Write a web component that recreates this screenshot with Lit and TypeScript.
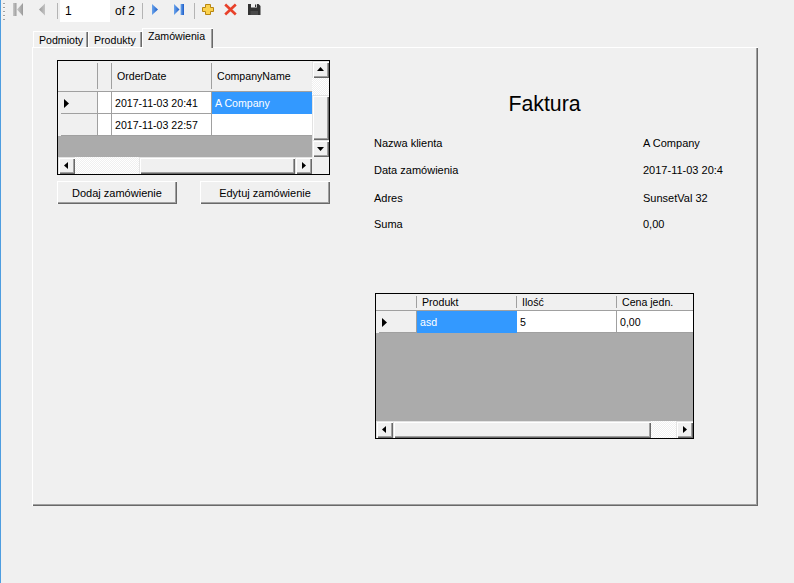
import { LitElement, html, css, svg } from 'lit';
import { customElement, property } from 'lit/decorators.js';

const arrow = (dir: 'up' | 'down' | 'left' | 'right') => {
  const points = {
    up: '1,6 4.5,2 8,6',
    down: '1,3 8,3 4.5,7',
    left: '6,1 6,8 2,4.5',
    right: '3,1 3,8 7,4.5',
  }[dir];
  return html`<svg width="9" height="9" viewBox="0 0 9 9"><polygon points=${points} fill="#000" /></svg>`;
};

@customElement('data-grid')
export class DataGrid extends LitElement {
  static styles = css`
    :host {
      display: block;
      box-sizing: border-box;
      border: 1px solid #000;
      font: 10.6px 'Liberation Sans', Arial, sans-serif;
      color: #000;
      background: #ababab;
    }
    .frame {
      display: flex;
    }
    .main {
      flex: 1;
      min-width: 0;
      display: flex;
      flex-direction: column;
    }
    .cells {
      display: grid;
    }
    .head {
      display: flex;
      align-items: center;
      padding-left: 5px;
      background:
        linear-gradient(#a0a0a0, #a0a0a0) right 2px / 1px calc(100% - 4px) no-repeat,
        #f0f0f0;
      border-bottom: 1px solid #a0a0a0;
      overflow: hidden;
      white-space: nowrap;
    }
    .head.last {
      background: #f0f0f0;
    }
    .rowhead {
      display: flex;
      align-items: center;
      padding-left: 5px;
      background:
        linear-gradient(#a0a0a0, #a0a0a0) 3px 100% / 100% 1px no-repeat,
        #f0f0f0;
      border-right: 1px solid #a0a0a0;
      box-sizing: border-box;
    }
    .cell {
      display: flex;
      align-items: center;
      padding-left: 3px;
      background: #fff;
      border-right: 1px solid #a0a0a0;
      border-bottom: 1px solid #a0a0a0;
      overflow: hidden;
      white-space: nowrap;
    }
    .cell.last {
      border-right: none;
    }
    .cell.selected {
      background: #3399ff;
      color: #fff;
      border-color: #3399ff;
    }
    .empty {
      background: #ababab;
    }
    .bar {
      display: flex;
      flex: none;
    }
    .bar.h {
      height: 17px;
    }
    .bar.v {
      width: 17px;
      flex-direction: column;
    }
    .btn,
    .thumb {
      background: #f0f0f0;
      box-shadow:
        inset 1px 1px 0 #e3e3e3,
        inset 2px 2px 0 #fff,
        inset -1px -1px 0 #696969,
        inset -2px -2px 0 #a0a0a0;
    }
    .btn {
      flex: none;
      width: 17px;
      height: 17px;
      display: flex;
      align-items: center;
      justify-content: center;
    }
    .track {
      background: repeating-conic-gradient(#f0f0f0 0 25%, #fff 0 50%) 0 0 / 2px 2px;
      flex: none;
    }
    .corner {
      width: 17px;
      height: 17px;
      background: #f0f0f0;
      flex: none;
    }
  `;

  @property({ type: Array }) columns: { title: string; width: number }[] = [];
  @property({ type: Array }) rows: { value: string; selected?: boolean }[][] = [];
  @property({ type: Number }) headWidth = 40;
  @property({ type: Number }) headHeight = 31;
  @property({ type: Number }) fill = 21;
  @property({ type: Array }) hbar: number[] = [];
  @property({ type: Array }) vbar: number[] | null = null;

  private _hTrack() {
    // before-thumb track, thumb, after-thumb track
    const [before, thumb, after] = this.hbar;
    return html`
      <div class="bar h">
        <div class="btn">${arrow('left')}</div>
        ${before ? html`<div class="track" style="width:${before}px"></div>` : ''}
        <div class="thumb" style="width:${thumb}px"></div>
        ${after ? html`<div class="track" style="width:${after}px"></div>` : ''}
        <div class="btn">${arrow('right')}</div>
      </div>
    `;
  }

  render() {
    const template = [this.headWidth, ...this.columns.map((c) => c.width)].map((w) => `${w}px`).join(' ');
    const lastCol = this.columns.length - 1;
    return html`
      <div class="frame">
        <div class="main">
          <div class="cells" style="grid-template-columns:${template};grid-auto-rows:22px;grid-template-rows:${this.headHeight}px">
            <div class="head"></div>
            ${this.columns.map((c, n) => html`<div class="head ${n === lastCol ? 'last' : ''}">${c.title}</div>`)}
            ${this.rows.map(
              (row, i) => html`
                <div class="rowhead">
                  ${i === 0
                    ? html`<svg width="8" height="11" viewBox="0 0 8 11"><polygon points="1,1 1,10 6,5.5" fill="#000" /></svg>`
                    : ''}
                </div>
                ${row.map(
                  (c, n) =>
                    html`<div class="cell ${c.selected ? 'selected' : ''} ${n === lastCol ? 'last' : ''}">${c.value}</div>`,
                )}
              `,
            )}
          </div>
          <div class="empty" style="height:${this.fill}px"></div>
          ${this._hTrack()}
        </div>
        ${this.vbar
          ? html`
              <div class="bar v">
                <div class="btn">${arrow('up')}</div>
                <div class="track" style="height:${this.vbar[0]}px"></div>
                <div class="thumb" style="height:${this.vbar[1]}px"></div>
                <div class="btn">${arrow('down')}</div>
                <div class="corner"></div>
              </div>
            `
          : ''}
      </div>
    `;
  }
}

const icons = {
  first: svg`<defs><linearGradient id="g1" x1="0" x2="1"><stop offset="0" stop-color="#c8c8c8"/><stop offset="1" stop-color="#9a9a9a"/></linearGradient></defs>
    <rect x="1" y="3" width="3.5" height="13" fill="url(#g1)"/><polygon points="11,3 11,16 5,9.5" fill="url(#g1)"/>`,
  prev: svg`<defs><linearGradient id="g2" x1="0" x2="1"><stop offset="0" stop-color="#9a9a9a"/><stop offset="1" stop-color="#c4c4c4"/></linearGradient></defs>
    <polygon points="10,3.5 10,15.5 4,9.5" fill="url(#g2)"/>`,
  next: svg`<defs><linearGradient id="g3" x1="0" x2="1"><stop offset="0" stop-color="#6ba5ec"/><stop offset="1" stop-color="#1c5cc8"/></linearGradient></defs>
    <polygon points="3,4 3,15 9,9.5" fill="url(#g3)"/>`,
  last: svg`<defs><linearGradient id="g4" x1="0" x2="1"><stop offset="0" stop-color="#6ba5ec"/><stop offset="1" stop-color="#1c5cc8"/></linearGradient></defs>
    <polygon points="2,4 2,15 7.5,9.5" fill="url(#g4)"/><rect x="8.6" y="4" width="3.4" height="11" fill="url(#g4)"/>`,
  add: svg`<polygon points="4.5,4.5 9.5,4.5 9.5,7.5 12.5,7.5 12.5,11.5 9.5,11.5 9.5,14.5 4.5,14.5 4.5,11.5 1.5,11.5 1.5,7.5 4.5,7.5" fill="#fbd24e" stroke="#b8860f" stroke-width="1"/>`,
  remove: svg`<path d="M1.2 4.5 L11.8 14.5 M11.8 4.5 L1.2 14.5" stroke="#e8412a" stroke-width="2.6" fill="none"/>`,
  save: svg`<path d="M1 4 H11.5 L13.5 6 V15 H1 Z" fill="#333"/><rect x="4" y="4" width="6" height="3.5" fill="#f0f0f0"/><rect x="8" y="4.5" width="1.2" height="2.5" fill="#333"/><rect x="3.5" y="11" width="7.5" height="4" fill="#4a4a4a"/>`,
};

@customElement('app-root')
export class AppRoot extends LitElement {
  static styles = css`
    :host {
      display: block;
      min-height: 583px;
      box-sizing: border-box;
      background: #f0f0f0;
      border-left: 1px solid #4d9de0;
      font: 11px 'Liberation Sans', Arial, sans-serif;
      color: #000;
    }
    .toolbar {
      display: flex;
      align-items: flex-start;
      height: 28px;
    }
    .grip {
      width: 2px;
      height: 17px;
      margin: 3px 3px 0 2px;
      background: repeating-linear-gradient(#a0a0a0 0 1px, #f8f8f8 1px 2px, #f0f0f0 2px 4px);
    }
    .tool {
      width: 23px;
      height: 22px;
      padding-left: 4px;
      box-sizing: border-box;
    }
    .tool svg {
      display: block;
    }
    .sep {
      width: 1px;
      height: 16px;
      margin: 3px 2px 0 3px;
      background: #b4b4b4;
    }
    .pos {
      width: 50px;
      height: 22px;
      box-sizing: border-box;
      padding: 4px 5px 0;
      background: #fff;
      font-size: 12px;
    }
    .count {
      width: 29px;
      box-sizing: border-box;
      padding: 4px 0 0 5px;
      font-size: 12px;
      white-space: nowrap;
    }
    .tabs {
      display: flex;
      align-items: flex-end;
      height: 20px;
      padding-left: 32px;
      position: relative;
      z-index: 1;
      margin-bottom: -1px;
      font-size: 10.6px;
    }
    .tab {
      height: 17px;
      line-height: 17px;
      box-sizing: border-box;
      padding: 1px 0 0 6px;
      background: #f0f0f0;
      box-shadow:
        inset 1px 1px 0 #fff,
        inset -1px 0 0 #696969,
        inset -2px 0 0 #a0a0a0;
      border-bottom: 1px solid #fff;
    }
    .tab.first {
      width: 55px;
    }
    .tab.second {
      width: 54px;
    }
    .tab.active {
      width: 71px;
      height: 20px;
      padding: 0 0 2px 6px;
      border-bottom: none;
      line-height: 17px;
    }
    .panel {
      width: 727px;
      height: 459px;
      margin-left: 30px;
      box-sizing: border-box;
      padding: 13px 0 0 26px;
      display: flex;
      gap: 44px;
      background: #f0f0f0;
      box-shadow:
        inset 1px 0 0 #f0f0f0,
        inset 2px 1px 0 #fff,
        inset -1px -1px 0 #696969,
        inset -2px -2px 0 #a0a0a0;
    }
    .left {
      width: 273px;
      flex: none;
    }
    .actions {
      display: flex;
      justify-content: space-between;
      margin-top: 6px;
    }
    .action {
      height: 23px;
      padding: 0;
      border: none;
      font: inherit;
      color: #000;
      background: #f0f0f0;
      box-shadow:
        inset 1px 1px 0 #fff,
        inset -1px -1px 0 #696969,
        inset -2px -2px 0 #a0a0a0;
    }
    .action.add {
      width: 120px;
    }
    .action.edit {
      width: 130px;
    }
    .right {
      width: 349px;
      flex: none;
    }
    .title {
      margin: 32px 8px 0 0;
      height: 24px;
      line-height: 24px;
      text-align: center;
      font-size: 21.3px;
      font-weight: normal;
    }
    .info {
      display: grid;
      grid-template-columns: 269px 80px;
      grid-template-rows: 27px 28px 28px 24px;
      align-items: center;
      margin-top: 13px;
    }
    .info div {
      white-space: nowrap;
    }
    .lines {
      margin: 57px 0 0 1px;
      width: 319px;
    }
  `;

  private orders = [
    [{ value: '' }, { value: '2017-11-03 20:41' }, { value: 'A Company', selected: true }],
    [{ value: '' }, { value: '2017-11-03 22:57' }, { value: '' }],
  ];

  private items = [[{ value: 'asd', selected: true }, { value: '5' }, { value: '0,00' }]];

  // the date is cut to this width in the label of the original form
  private info = [
    ['Nazwa klienta', 'A Company'],
    ['Data zamówienia', '2017-11-03 20:4'],
    ['Adres', 'SunsetVal 32'],
    ['Suma', '0,00'],
  ];

  private _tool(icon: unknown) {
    return html`<div class="tool"><svg width="16" height="20" viewBox="0 0 16 20">${icon}</svg></div>`;
  }

  render() {
    return html`
      <div class="toolbar">
        <div class="grip"></div>
        ${this._tool(icons.first)} ${this._tool(icons.prev)}
        <div class="sep"></div>
        <div class="pos">1</div>
        <div class="count">of 2</div>
        <div class="sep"></div>
        ${this._tool(icons.next)} ${this._tool(icons.last)}
        <div class="sep"></div>
        ${this._tool(icons.add)} ${this._tool(icons.remove)} ${this._tool(icons.save)}
      </div>
      <div class="tabs">
        <div class="tab first">Podmioty</div>
        <div class="tab second">Produkty</div>
        <div class="tab active">Zamówienia</div>
      </div>
      <div class="panel">
        <div class="left">
          <data-grid
            .columns=${[
              { title: '', width: 14 },
              { title: 'OrderDate', width: 100 },
              { title: 'CompanyName', width: 100 },
            ]}
            .rows=${this.orders}
            .hbar=${[64, 156, 0]}
            .vbar=${[17, 45]}
          ></data-grid>
          <div class="actions">
            <button class="action add">Dodaj zamówienie</button>
            <button class="action edit">Edytuj zamówienie</button>
          </div>
        </div>
        <div class="right">
          <h1 class="title">Faktura</h1>
          <div class="info">
            ${this.info.map(([k, v]) => html`<div>${k}</div><div>${v}</div>`)}
          </div>
          <data-grid
            class="lines"
            .headWidth=${41}
            .headHeight=${17}
            .fill=${88}
            .columns=${[
              { title: 'Produkt', width: 100 },
              { title: 'Ilość', width: 100 },
              { title: 'Cena jedn.', width: 76 },
            ]}
            .rows=${this.items}
            .hbar=${[0, 258, 25]}
          ></data-grid>
        </div>
      </div>
    `;
  }
}
